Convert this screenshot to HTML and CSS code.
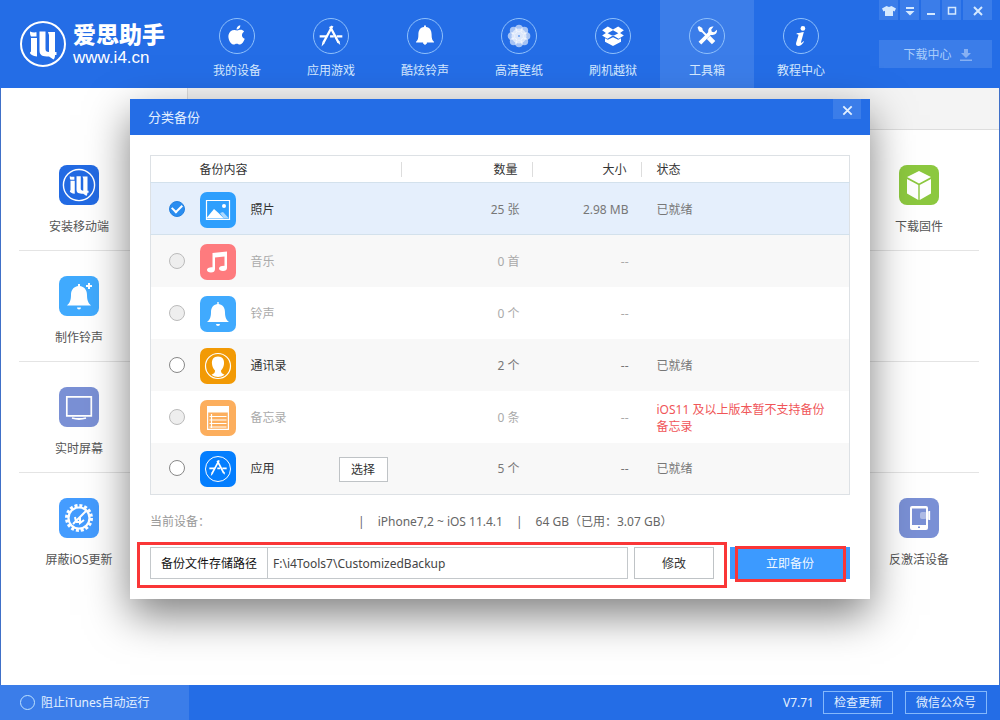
FILE: index.html
```html
<!DOCTYPE html>
<html lang="zh-CN">
<head>
<meta charset="utf-8">
<meta name="viewport" content="width=device-width, initial-scale=1">
<title>爱思助手</title>
<link rel="stylesheet" href="styles.css">
</head>
<body>
<svg class="sprite" aria-hidden="true">
  <symbol id="logo" viewBox="0 0 48 48">
    <circle cx="24" cy="24" r="22" fill="none" stroke="currentColor" stroke-width="2"/>
    <path fill="currentColor" d="M11 11.500c2 1 4 1 6.500.8v4.200h-5.500c-1-1.500-1-3-1-5zM12 18h6v18.500c-4-.5-7-2-7-4l1-1zM20.500 11.500h6V29c0 2 1 3 3.500 3V15l-1-3h7v20h1.500v3H36c0 2-.5 3.500-1.500 4.500l-4.500-3c-6.500 0-9.500-1-9.500-6z"/>
  </symbol>
  <symbol id="store" viewBox="0 0 36 36">
    <g fill="none" stroke="currentColor" stroke-width="2.400"><path d="M19.500 7.500 10 25M17 8l9 17" /><path d="M6 18.500h8M17 18.500h4M24 18.500h6"/></g>
    <path fill="currentColor" d="m9 24 2.500 1.500L8 29zM24.500 24.500l2.500-1.300.8 4.300z"/>
  </symbol>
</svg>

<div class="window">
  <header class="header">
    <a class="brand" href="#">
      <svg class="brand-mark"><use href="#logo"/></svg>
      <span class="brand-text"><strong>爱思助手</strong><span>www.i4.cn</span></span>
    </a>
    <nav class="nav">
      <a href="#"><svg viewBox="0 0 36 36"><path fill="currentColor" d="M18.500 12.200c1.500-.8 5.500-1.800 7 1.300-3.500 2-2.500 6.500.7 7.500-1 3-3 6-5 6-1.500 0-2-.8-3.500-.8s-2 .8-3.500.8c-3 0-6-6-5.200-10 .8-5 5.500-6.500 9.500-4.800zM17.500 11c0-2.500 1.500-4 4-4.500.2 2.500-1.500 4.500-4 4.500z"/></svg>我的设备</a>
      <a href="#"><svg><use href="#store"/></svg>应用游戏</a>
      <a href="#"><svg viewBox="0 0 36 36"><path fill="currentColor" d="M17 7h2v1.500c4.500.5 6 4 6 8 0 4 .5 6 2.500 7.500v1h-19v-1c2-1.500 2.500-3.500 2.500-7.500 0-4 1.500-7.500 6-8zM16 25h4v1l-2 1.500-2-1.500z"/></svg>酷炫铃声</a>
      <a href="#"><svg viewBox="0 0 36 36"><g fill="currentColor" fill-opacity=".6"><circle cx="18" cy="10" r="4"/><circle cx="23.700" cy="12.300" r="4"/><circle cx="26" cy="18" r="4"/><circle cx="23.700" cy="23.700" r="4"/><circle cx="18" cy="26" r="4"/><circle cx="12.300" cy="23.700" r="4"/><circle cx="10" cy="18" r="4"/><circle cx="12.300" cy="12.300" r="4"/><circle cx="18" cy="18" r="8"/></g><circle cx="18" cy="18" r="5" fill="currentColor" fill-opacity=".6"/><circle cx="18" cy="18" r="1" fill="#5e99f0"/></svg>高清壁纸</a>
      <a href="#"><svg viewBox="0 0 36 36"><path fill="currentColor" d="m12.500 8 5.500 3 5.500-3 6 4-4 2.800 4 2.700-5.500 3.500-6-3.500-6 3.500-5.500-3.500 4-2.700-4-2.800zM18 11.800 12.300 15l5.700 3 5.700-3zM9.500 20.500l3 1.500 5.500-2.800 5.500 2.800 3-1.500V24L18 28.500 9.500 24z"/></svg>刷机越狱</a>
      <a href="#" class="active" aria-current="page"><svg viewBox="0 0 36 36"><g stroke="currentColor" fill="none"><path d="m10 10 8 8" stroke-width="2"/><path d="m19.500 19.500 5.500 5.500" stroke-width="5"/><path d="m10.500 25.500 12-12" stroke-width="4"/></g><path fill="currentColor" d="m8 9 1.500-1.500 3.500 2 .5 3L12 14l-2.500-1zM25 8l-2.500 3 .5 2.500 2.500.5 3-2.500c.5 3-1.500 5.500-4.500 5.500-3.500 0-5.500-3-4.500-6 .8-2.200 3-3.500 5.500-3z"/></svg>工具箱</a>
      <a href="#"><svg viewBox="0 0 36 36"><g fill="currentColor"><circle cx="20" cy="10" r="2.500"/><path d="M13.500 15c2-.2 5-.8 7.500-1.200l-3 10.700c-.3 1.200.8.700 2.500-1l.7.600c-2 3-4 4.500-6 4.500-2.300 0-2.800-1.500-2.300-3.500l2.400-7.900c.2-.9-.6-1-2-1z"/></g></svg>教程中心</a>
    </nav>
    <div class="header-side">
      <div class="controls">
        <button aria-label="皮肤"><svg viewBox="0 0 14 14"><path fill="currentColor" d="M4.500 2 7 3l2.500-1L14 4.500l-1.500 3-1.500-.7V12H3V6.800l-1.500.7L0 4.500z"/></svg></button>
        <button aria-label="菜单"><svg viewBox="0 0 14 14"><path fill="currentColor" d="M3 3h8v2H3zM2.500 7h9L7 11.500z"/></svg></button>
        <button aria-label="最小化"><svg viewBox="0 0 14 14"><path fill="currentColor" d="M3 9h8v2H3z"/></svg></button>
        <button aria-label="最大化"><svg viewBox="0 0 14 14"><path fill="none" stroke="currentColor" stroke-width="1.500" d="M3.500 3.500h7v6.500h-7z"/></svg></button>
        <button aria-label="关闭窗口" class="wide"><svg viewBox="0 0 14 14"><path fill="none" stroke="currentColor" stroke-width="2" d="m3 3 8 8M11 3l-8 8"/></svg></button>
      </div>
      <button class="downloads">下载中心<svg viewBox="0 0 12 12"><path fill="currentColor" d="M4 0h4v4h3L6 9 1 4h3zM0 10.500h12V12H0z"/></svg></button>
    </div>
  </header>

  <main class="main">
    <div class="tabs"><div class="tab"></div></div>
    <div class="tools">
      <div class="tool-row">
        <a class="tool" href="#"><svg viewBox="0 0 40 40"><rect width="40" height="40" rx="8" fill="#226ae3"/><g color="#fff"><use href="#logo" x="3" y="3" width="34" height="34"/></g></svg>安装移动端</a>
        <a class="tool" href="#"><svg viewBox="0 0 40 40"><rect width="40" height="40" rx="8" fill="#8cc83f"/><path fill="#fff" d="m20 6 12 6-12 6.500L8 12zM8 14l11.300 6v15L8 28.500zM32 14l-11.300 6v15L32 28.500z"/></svg>下载固件</a>
      </div>
      <div class="tool-row">
        <a class="tool" href="#"><svg viewBox="0 0 40 40"><rect width="40" height="40" rx="8" fill="#40aafe"/><path fill="#fff" d="M19 8h2v2c5 1 7 4.500 7 9 0 6 1.500 8 4 10.500H8c2.500-2.500 4-4.500 4-10.500 0-4.500 2-8 7-9zM18 31.500h4a2 2 0 0 1-4 0zM29 7h2v2h2v2h-2v2h-2v-2h-2V9h2z"/></svg>制作铃声</a>
      </div>
      <div class="tool-row">
        <a class="tool" href="#"><svg viewBox="0 0 40 40"><rect width="40" height="40" rx="8" fill="#7a90d5"/><path fill="none" stroke="#fff" stroke-width="1.700" d="M7.800 9.800h24.500v19H7.800z"/><path fill="none" stroke="#fff" stroke-width="1.800" d="M13 31q7 2 14 0"/></svg>实时屏幕</a>
      </div>
      <div class="tool-row">
        <a class="tool" href="#"><svg viewBox="0 0 40 40"><rect width="40" height="40" rx="8" fill="#449cff"/><g fill="none" stroke="#fff"><circle cx="20" cy="20" r="12.500" stroke-width="3" stroke-dasharray="3 1.909"/><circle cx="20" cy="20" r="10.500" stroke-width="2.200"/><path stroke-width="2" d="M28 12 14 26M16 19l1 5M17 24h5M21 19v6l4-3"/></g></svg>屏蔽iOS更新</a>
        <a class="tool" href="#"><svg viewBox="0 0 40 40"><rect width="40" height="40" rx="8" fill="#7a90d5"/><path fill="#fff" fill-rule="evenodd" d="M13 8h14q2 0 2 2v20q0 2-2 2H13q-2 0-2-2V10q0-2 2-2zm0 2.500v16.500h14V10.500zM19 28.500v1.500h2v-1.500z"/><rect x="21" y="14" width="7" height="7" rx="2" fill="#fff" opacity=".4"/><path fill="none" stroke="#fff" stroke-width="1.300" d="M27 14h2v7h-2M30.500 13v9"/></svg>反激活设备</a>
      </div>
    </div>
  </main>

  <footer class="footer">
    <label class="block-itunes"><input type="checkbox">阻止iTunes自动运行</label>
    <div class="footer-side"><span>V7.71</span><button>检查更新</button><button>微信公众号</button></div>
  </footer>

  <div class="overlay">
    <section class="dialog" role="dialog" aria-labelledby="dialog-title">
      <div class="dialog-head">
        <h1 id="dialog-title">分类备份</h1>
        <button aria-label="关闭"><svg viewBox="0 0 14 14"><path fill="none" stroke="currentColor" stroke-width="2" d="m2.500 2.500 9 9M11.500 2.500l-9 9"/></svg></button>
      </div>
      <div class="dialog-body">
        <table class="backup">
          <colgroup><col class="c-check"><col class="c-name"><col class="c-count"><col class="c-size"><col></colgroup>
          <thead>
            <tr><td></td><th scope="col" class="sep">备份内容</th><th scope="col" class="num sep">数量</th><th scope="col" class="num sep">大小</th><th scope="col" class="state">状态</th></tr>
          </thead>
          <tbody>
            <tr class="selected">
              <td class="check"><input type="checkbox" id="photos" checked></td>
              <td><label for="photos"><svg viewBox="0 0 36 36"><rect width="36" height="36" rx="7" fill="#2e9ffd"/><path fill="none" stroke="#fff" stroke-width="1.200" d="M6.500 8.500h23v19h-23z"/><circle cx="24" cy="14" r="2" fill="#fff"/><path fill="#fff" opacity=".6" d="m20 21 3-1 6 6.500h-5z"/><path fill="#fff" d="m7 25.500 7-8.500 4.500 4 5.500 5.500H7z"/></svg>照片</label></td>
              <td class="num">25 张</td><td class="num">2.98 MB</td><td class="state">已就绪</td>
            </tr>
            <tr class="off">
              <td class="check"><input type="checkbox" id="music" disabled></td>
              <td><label for="music"><svg viewBox="0 0 36 36"><rect width="36" height="36" rx="7" fill="#fe7b7e"/><path fill="#fff" d="M12.500 9 27 7.500V24c0 2-1.500 3-4 3s-4-1-4-2.500 1.500-2.500 5.500-2.700V12.500L15 13.500V25c0 2.500-1.500 3.500-4 3.500s-4-1-4-2.500 1.500-2.700 5.500-2.800z"/></svg>音乐</label></td>
              <td class="num">0 首</td><td class="num">--</td><td></td>
            </tr>
            <tr class="off">
              <td class="check"><input type="checkbox" id="ringtones" disabled></td>
              <td><label for="ringtones"><svg viewBox="0 0 36 36"><rect width="36" height="36" rx="7" fill="#40aafe"/><path fill="#fff" d="M17.300 6h1.400v2c4.300.7 6.300 4 6.300 8.500 0 5 1.500 7.500 4 9.500H7c2.500-2 4-4.500 4-9.500C11 12 13 8.700 17.300 8zM16 28h4a2 2 0 0 1-4 0z"/></svg>铃声</label></td>
              <td class="num">0 个</td><td class="num">--</td><td></td>
            </tr>
            <tr>
              <td class="check"><input type="checkbox" id="contacts"></td>
              <td><label for="contacts"><svg viewBox="0 0 36 36"><rect width="36" height="36" rx="7" fill="#f29a05"/><circle cx="18" cy="18" r="12.500" fill="none" stroke="#fff" stroke-width="1.200"/><path fill="#fff" d="M18 8.500c4.500 0 6.500 3 6 7.500-.3 3-1.500 5-3 6.500 0 2 .5 3 3.500 4.200-4 3-9 3-13 0 3-1.200 3.500-2.200 3.500-4.200-1.500-1.500-2.700-3.500-3-6.500-.5-4.500 1.500-7.500 6-7.500z"/></svg>通讯录</label></td>
              <td class="num">2 个</td><td class="num">--</td><td class="state">已就绪</td>
            </tr>
            <tr class="off">
              <td class="check"><input type="checkbox" id="notes" disabled></td>
              <td><label for="notes"><svg viewBox="0 0 36 36"><rect width="36" height="36" rx="7" fill="#fcae5d"/><path fill="#fff" d="M7 6h22v6.500H7z"/><path fill="none" stroke="#fff" stroke-width="1.200" d="M7.600 12v17.400h20.800V12M11.500 14v14M9.500 16.500h17M9.500 20h17M9.500 23.500h17M9.500 27h17"/></svg>备忘录</label></td>
              <td class="num">0 条</td><td class="num">--</td><td class="state warn">iOS11 及以上版本暂不支持备份备忘录</td>
            </tr>
            <tr>
              <td class="check"><input type="checkbox" id="apps"></td>
              <td><div class="with-action"><label for="apps"><svg viewBox="0 0 36 36"><rect width="36" height="36" rx="7" fill="#047efe"/><circle cx="18" cy="18" r="12.500" fill="none" stroke="#fff"/><g color="#fff"><use href="#store" x="5" y="4" width="26" height="26"/></g></svg>应用</label><button class="outlined">选择</button></div></td>
              <td class="num">5 个</td><td class="num">--</td><td class="state">已就绪</td>
            </tr>
          </tbody>
        </table>

        <p class="device"><span class="device-name">当前设备：</span><span>|</span><span>iPhone7,2 ~ iOS 11.4.1</span><span>|</span><span>64 GB（已用：3.07 GB）</span></p>

        <div class="actions">
          <div class="path-group marked">
            <div class="path-field"><label for="path">备份文件存储路径</label><input id="path" type="text" value="F:\i4Tools7\CustomizedBackup"></div>
            <button class="outlined">修改</button>
          </div>
          <button class="primary marked">立即备份</button>
        </div>
      </div>
    </section>
  </div>
</div>
</body>
</html>
```
FILE: styles.css
```css
* { box-sizing: border-box; }

:root {
  --blue: #246de6;
  --blue-light: #3b7de9;
  --pale: #d5e9ff;
}

body {
  margin: 0;
  font: 12px/18px "Noto Sans", "Noto Sans CJK SC", sans-serif;
  color: #333;
}

button, input { font: inherit; color: inherit; }
button { border: 0; padding: 2px 0 0; cursor: pointer; }
a { color: inherit; text-decoration: none; }
svg { display: block; flex: none; }
.sprite { position: absolute; width: 0; height: 0; }

.window {
  position: relative;
  display: flex;
  flex-direction: column;
  min-height: 100vh;
}

/* Header */
.header {
  display: flex;
  min-height: 88px;
  background: var(--blue);
  color: var(--pale);
}

.brand {
  display: flex;
  flex: none;
  align-items: center;
  gap: 6px;
  width: 190px;
  padding-left: 19px;
  color: #fff;
}
.brand-mark { width: 48px; height: 48px; }
.brand-text {
  display: flex;
  flex-direction: column;
  font: 17px/19px "Liberation Sans", sans-serif;
}
.brand-text strong { font: 900 23px/26px "Liberation Sans", "Noto Sans CJK SC", sans-serif; }

.nav { display: flex; flex: 1; }
.nav a {
  display: flex;
  flex: 0 1 94px;
  flex-direction: column;
  align-items: center;
  gap: 8px;
  padding-top: 18px;
}
.nav a.active { background: var(--blue-light); }
.nav svg {
  width: 36px;
  height: 36px;
  border: 1px solid #8fc0fb;
  border-radius: 50%;
  color: #fff;
}

.header-side {
  display: flex;
  flex: none;
  flex-direction: column;
  gap: 20px;
  width: 121px;
  padding-right: 8px;
}
.controls { display: flex; gap: 2px; }
.controls button {
  display: grid;
  flex: 1;
  place-items: center;
  height: 20px;
  background: var(--blue-light);
}
.controls .wide { flex: 0 0 29px; }
.controls svg { width: 14px; height: 14px; }
.downloads {
  display: flex;
  align-items: center;
  justify-content: center;
  gap: 8px;
  height: 28px;
  padding-left: 4px;
  background: var(--blue-light);
  color: #a9cdfb;
}
.downloads svg { width: 12px; height: 12px; color: #86b0f3; }

/* Tool page */
.main {
  flex: 1;
  border: solid #4070c8;
  border-width: 0 1px;
  background: #fff;
}
.tabs {
  display: flex;
  height: 42px;
  border-bottom: 1px solid #ddd;
  background: #f4f4f4;
}
.tab {
  width: 187px;
  height: 42px;
  border-right: 1px solid #ddd;
  background: #fff;
}
.tools { padding: 10px 20px 0 18px; }
.tool-row {
  display: flex;
  justify-content: space-between;
  height: 111px;
  border-bottom: 1px solid #e4e4e4;
}
.tool-row:last-child { border-bottom: 0; }
.tool {
  display: flex;
  flex-direction: column;
  align-items: center;
  gap: 13px;
  width: 120px;
  padding-top: 25px;
  color: #555;
}
.tool svg { width: 40px; height: 40px; }

/* Footer */
.footer {
  display: flex;
  justify-content: space-between;
  min-height: 35px;
  background: var(--blue);
  color: #e3f0ff;
}
.block-itunes {
  display: flex;
  align-items: center;
  gap: 6px;
  width: 189px;
  padding-left: 20px;
  background: var(--blue-light);
}
.block-itunes input {
  appearance: none;
  width: 15px;
  height: 15px;
  margin: 0;
  border: 1px solid #bfe2ff;
  border-radius: 50%;
}
.footer-side {
  display: flex;
  align-items: center;
  gap: 12px;
  padding-right: 13px;
}
.footer-side span { margin-right: -3px; }
.footer-side button {
  height: 23px;
  padding: 0 10px;
  border: 1px solid #84b8fb;
  background: none;
}

/* Dialog */
.overlay {
  position: absolute;
  inset: 0;
  display: flex;
  align-items: flex-start;
  justify-content: center;
  padding: 99px 20px 0;
}
.dialog {
  flex: 0 1 740px;
  background: #fff;
  box-shadow: 0 16px 40px rgba(0, 0, 0, .5);
}
.dialog-head {
  display: flex;
  align-items: flex-start;
  justify-content: space-between;
  padding: 0 9px 0 18px;
  background: var(--blue);
  color: #e3f0ff;
}
.dialog-head h1 { margin: 0; font-size: 13px; font-weight: 400; line-height: 36px; }
.dialog-head button {
  display: grid;
  place-items: center;
  width: 28px;
  height: 20px;
  background: var(--blue-light);
}
.dialog-head svg { width: 13px; height: 13px; }
.dialog-body { padding: 20px; }

.backup {
  width: 100%;
  border: 1px solid #dde1e5;
  border-collapse: collapse;
  table-layout: fixed;
}
.c-check { width: 49px; }
.c-name { width: 202px; }
.c-count { width: 131px; }
.c-size { width: 109px; }
.backup th, .backup td { padding: 2px 0 0; text-align: left; font-weight: 400; }
.backup .check { padding: 0; }
.backup thead tr { height: 27px; }
.backup .sep {
  background: linear-gradient(#ddd, #ddd) right center / 1px 15px no-repeat;
}
.backup tbody tr { height: 52px; }
.backup tbody tr:nth-child(even) { background: #f8f8f8; }
.backup tbody tr.selected { border: solid #d3e1ec; border-width: 1px 0; background: #e5effc; }
.backup td.num, .backup th.num { text-align: right; }
.backup th.num { padding-right: 15px; }
.backup td.num { padding-right: 13px; }
.backup tbody .num, .backup tbody .state { color: #777; }
.backup .state { padding-left: 15px; }
.backup tbody .state.warn { padding-right: 16px; color: #f05558; line-height: 17px; }
.backup tbody .off .num, .backup .off label { color: #aaa; }

.backup input {
  display: block;
  appearance: none;
  width: 16px;
  height: 16px;
  margin: 0 auto 0 18px;
  border: 1px solid #888;
  border-radius: 50%;
  background: #fff;
}
.backup input:disabled { border-color: #bbb; background: #eee; }
.backup input:checked {
  display: grid;
  place-items: center;
  border-color: #2682e0;
  background: #2a8df0;
}
.backup input:checked::before {
  content: "";
  width: 8px;
  height: 5px;
  margin-bottom: 2px;
  border: solid #fff;
  border-width: 0 0 2px 2px;
  transform: rotate(-45deg);
}
.backup label { display: flex; align-items: center; gap: 15px; }
.backup label svg { width: 36px; height: 36px; }
.with-action {
  display: flex;
  align-items: center;
  justify-content: space-between;
  padding-right: 14px;
}
.outlined { border: 1px solid #bfc3c6; background: #fff; }
.with-action .outlined { width: 49px; height: 25px; }

.device {
  display: flex;
  gap: 13px;
  margin: 18px 0 16px;
  color: #666;
}
.device-name { width: 195px; color: #999; }

.actions { display: flex; gap: 16px; }
.path-group { display: flex; flex: 1; gap: 6px; min-width: 0; }
.path-field {
  display: flex;
  flex: 1;
  min-width: 0;
  height: 32px;
  border: 1px solid #c4c8cb;
}
.path-field label {
  flex: none;
  width: 117px;
  padding-top: 1px;
  border-right: 1px solid #c4c8cb;
  color: #111;
  line-height: 30px;
  text-align: center;
}
.path-field input {
  flex: 1;
  min-width: 0;
  padding: 2px 5px 0;
  border: 0;
  color: #444;
}
.path-group .outlined { width: 80px; }
.primary { width: 120px; height: 32px; background: #3c9aff; color: #f0f8ff; }

/* Red frames that point out the two steps */
.marked { position: relative; }
.marked::after {
  content: "";
  position: absolute;
  inset: -5px -13px -9px;
  border: 3px solid #fa3637;
  pointer-events: none;
}
.primary.marked::after { inset: -1px 4px -3px 5px; }
```
